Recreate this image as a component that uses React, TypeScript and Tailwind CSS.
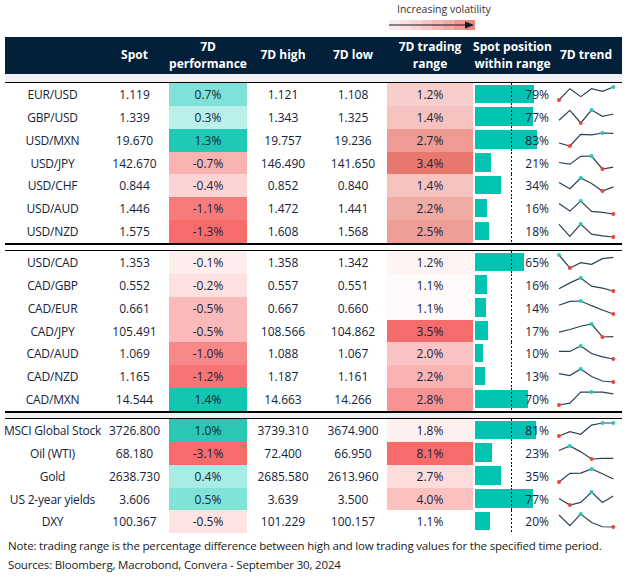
const COLS =
  "grid grid-cols-[95px_69px_78px_72px_68px_86px_2px_75px_72px]";

type Row = {
  name: string;
  spot: string;
  perf: string;
  perfBg: string;
  high: string;
  low: string;
  range: string;
  rangeBg: string;
  pos: number;
  trend: number[];
};

const sections: Row[][] = [
  [
    { name: "EUR/USD", spot: "1.119", perf: "0.7%", perfBg: "bg-[#7fe1d7]", high: "1.121", low: "1.108", range: "1.2%", rangeBg: "bg-[#f7cecb]", pos: 79, trend: [0, 0.87, 0.26, 0.87, 0.67, 1] },
    { name: "GBP/USD", spot: "1.339", perf: "0.3%", perfBg: "bg-[#b9f0ea]", high: "1.343", low: "1.325", range: "1.4%", rangeBg: "bg-[#f5c4c1]", pos: 77, trend: [0.21, 0.97, 0, 1, 0.51, 0.69] },
    { name: "USD/MXN", spot: "19.670", perf: "1.3%", perfBg: "bg-[#1fc9b6]", high: "19.757", low: "19.236", range: "2.7%", rangeBg: "bg-[#ef9a93]", pos: 83, trend: [0.23, 0, 0.9, 0.85, 1, 0.97] },
    { name: "USD/JPY", spot: "142.670", perf: "-0.7%", perfBg: "bg-[#f9b2b2]", high: "146.490", low: "141.650", range: "3.4%", rangeBg: "bg-[#e8786e]", pos: 21, trend: [0.5, 0.375, 0.975, 1, 0, 0.15] },
    { name: "USD/CHF", spot: "0.844", perf: "-0.4%", perfBg: "bg-[#fcd4d4]", high: "0.852", low: "0.840", range: "1.4%", rangeBg: "bg-[#f5c4c1]", pos: 34, trend: [0.66, 0.18, 1, 0.58, 0, 0.32] },
    { name: "USD/AUD", spot: "1.446", perf: "-1.1%", perfBg: "bg-[#f87b7b]", high: "1.472", low: "1.441", range: "2.2%", rangeBg: "bg-[#f0aba5]", pos: 16, trend: [0.8, 0.225, 1, 0.2, 0.125, 0] },
    { name: "USD/NZD", spot: "1.575", perf: "-1.3%", perfBg: "bg-[#f76b6b]", high: "1.608", low: "1.568", range: "2.5%", rangeBg: "bg-[#ee9e97]", pos: 18, trend: [0.97, 0.05, 1, 0.22, 0.08, 0] },
  ],
  [
    { name: "USD/CAD", spot: "1.353", perf: "-0.1%", perfBg: "bg-[#fdeded]", high: "1.358", low: "1.342", range: "1.2%", rangeBg: "bg-[#fff3f3]", pos: 65, trend: [1, 0, 0.41, 0.28, 0.72, 0.82] },
    { name: "CAD/GBP", spot: "0.552", perf: "-0.2%", perfBg: "bg-[#fde1e1]", high: "0.557", low: "0.551", range: "1.1%", rangeBg: "bg-[#fffafa]", pos: 16, trend: [0.175, 0.625, 1, 0.375, 0.225, 0] },
    { name: "CAD/EUR", spot: "0.661", perf: "-0.5%", perfBg: "bg-[#fbbaba]", high: "0.667", low: "0.660", range: "1.1%", rangeBg: "bg-[#fffafa]", pos: 14, trend: [0.67, 0.97, 1, 0.64, 0.31, 0] },
    { name: "CAD/JPY", spot: "105.491", perf: "-0.5%", perfBg: "bg-[#fbbaba]", high: "108.566", low: "104.862", range: "3.5%", rangeBg: "bg-[#f56c6c]", pos: 17, trend: [0.375, 0.575, 0.825, 1, 0, 0.025] },
    { name: "CAD/AUD", spot: "1.069", perf: "-1.0%", perfBg: "bg-[#f88787]", high: "1.088", low: "1.067", range: "2.0%", rangeBg: "bg-[#fbc4c4]", pos: 10, trend: [0.58, 0.58, 1, 0.42, 0.16, 0] },
    { name: "CAD/NZD", spot: "1.165", perf: "-1.2%", perfBg: "bg-[#f77474]", high: "1.187", low: "1.161", range: "2.2%", rangeBg: "bg-[#fab2b2]", pos: 13, trend: [0.65, 0.5, 1, 0.425, 0.075, 0] },
    { name: "CAD/MXN", spot: "14.544", perf: "1.4%", perfBg: "bg-[#13c6b1]", high: "14.663", low: "14.266", range: "2.8%", rangeBg: "bg-[#f89393]", pos: 70, trend: [0, 0.14, 0.99, 1, 0.99, 0.86] },
  ],
  [
    { name: "MSCI Global Stock", spot: "3726.800", perf: "1.0%", perfBg: "bg-[#2ac7b4]", high: "3739.310", low: "3674.900", range: "1.8%", rangeBg: "bg-[#fff0f0]", pos: 81, trend: [0, 0.34, 0.13, 0.84, 1, 1] },
    { name: "Oil (WTI)", spot: "68.180", perf: "-3.1%", perfBg: "bg-[#f76b6b]", high: "72.400", low: "66.950", range: "8.1%", rangeBg: "bg-[#f76b6b]", pos: 23, trend: [0.65, 1, 0.55, 0, 0.05, 0.05] },
    { name: "Gold", spot: "2638.730", perf: "0.4%", perfBg: "bg-[#a7ede5]", high: "2685.580", low: "2613.960", range: "2.7%", rangeBg: "bg-[#fddcdc]", pos: 35, trend: [0, 0.67, 0.69, 1, 0.64, 0.23] },
    { name: "US 2-year yields", spot: "3.606", perf: "0.5%", perfBg: "bg-[#80e3d8]", high: "3.639", low: "3.500", range: "4.0%", rangeBg: "bg-[#fbc0c0]", pos: 77, trend: [0.5, 0, 0.2, 1, 0.2, 0.7] },
    { name: "DXY", spot: "100.367", perf: "-0.5%", perfBg: "bg-[#fde3e3]", high: "101.229", low: "100.157", range: "1.1%", rangeBg: "bg-white", pos: 20, trend: [0.92, 0.1, 1, 0.34, 0.02, 0] },
  ],
];

const legendSteps = ["#fde9e9", "#fcdedd", "#fad2d0", "#f8c5c2", "#f6b7b3", "#f4a8a3", "#f19891", "#ee857d"];

function Sparkline({ values }: { values: number[] }) {
  const pts = values.map((v, i) => [9 + i * 10.86, 4 + (1 - v) * 13]);
  return (
    <svg width="72" height="23" className="block">
      <polyline
        points={pts.map((p) => p.join(",")).join(" ")}
        fill="none"
        stroke="#2e4155"
        strokeWidth="1.2"
      />
      {pts.map(([x, y], i) =>
        values[i] === 1 || values[i] === 0 ? (
          <circle key={i} cx={x} cy={y} r="2" fill={values[i] === 1 ? "#1fcbbb" : "#e8453c"} />
        ) : null
      )}
    </svg>
  );
}

function Cell({ children, className = "" }: { children?: React.ReactNode; className?: string }) {
  return (
    <div className={`flex items-center justify-center whitespace-nowrap pt-[1px] ${className}`}>
      {children}
    </div>
  );
}

function HeadCell({ lines }: { lines: string[] }) {
  return (
    <div className="flex flex-col items-center justify-center whitespace-nowrap">
      {lines.map((l) => (
        <span key={l} className="block">{l}</span>
      ))}
    </div>
  );
}

function DataRow({ r }: { r: Row }) {
  return (
    <div className={`${COLS} h-[22.86px]`}>
      <Cell className="tracking-[-0.2px]">{r.name}</Cell>
      <Cell>{r.spot}</Cell>
      <Cell className={r.perfBg}>{r.perf}</Cell>
      <Cell>{r.high}</Cell>
      <Cell>{r.low}</Cell>
      <Cell className={r.rangeBg}>{r.range}</Cell>
      <div />
      <div className="relative">
        <div className="mt-[1.5px] h-[18.5px] bg-[#00c4b1]" style={{ width: r.pos * 0.75 }} />
        <div className="absolute left-[36px] top-0 bottom-0 w-px bg-[repeating-linear-gradient(to_bottom,#111_0_2px,transparent_2px_4px)]" />
        <span className="absolute right-[1px] top-0 bottom-0 flex items-center pt-[1px]">{r.pos}%</span>
      </div>
      <Sparkline values={r.trend} />
    </div>
  );
}

function Divider({ fill }: { fill: string }) {
  return (
    <div>
      <div className="h-[1.5px] bg-black" />
      <div className={`h-[5px] ${fill}`} />
      <div className="h-[1.5px] bg-black" />
    </div>
  );
}

export default function App() {
  return (
    <div className="w-[632px] h-[577px] bg-white font-['Open_Sans',sans-serif] text-[12px] text-[#14233a]">
      {/* legend */}
      <div className="h-[37px] pl-[389px] pt-[2px]">
        <div className="pl-[8px] text-[10.5px] leading-[14px] text-[#333]">Increasing volatility</div>
        <svg width="86" height="10" className="mt-[4px] block">
          {legendSteps.map((c, i) => (
            <rect key={c} x={i * 10.75} y="0" width="10.75" height="10" fill={c} />
          ))}
          <line x1="0" y1="5" x2="78" y2="5" stroke="#0d1b2a" strokeWidth="1.2" />
          <polygon points="76,1.5 85,5 76,8.5" fill="#0d1b2a" />
        </svg>
      </div>

      <div className="ml-[5px] w-[617px]">
        {/* header */}
        <div className={`${COLS} h-[37px] bg-[#02203a] text-white font-bold leading-[16.5px]`}>
          <div />
          <HeadCell lines={["Spot"]} />
          <HeadCell lines={["7D", "performance"]} />
          <HeadCell lines={["7D high"]} />
          <HeadCell lines={["7D low"]} />
          <HeadCell lines={["7D trading", "range"]} />
          <div />
          <HeadCell lines={["Spot position", "within range"]} />
          <HeadCell lines={["7D trend"]} />
        </div>
        <div className="h-[7.5px] bg-[#eff1f4]" />
        <div className="h-[1.5px] bg-black" />

        {sections[0].map((r) => <DataRow key={r.name} r={r} />)}
        <Divider fill="bg-white" />
        {sections[1].map((r) => <DataRow key={r.name} r={r} />)}
        <Divider fill="bg-[#eff1f4]" />
        {sections[2].map((r) => <DataRow key={r.name} r={r} />)}
      </div>

      {/* footnote */}
      <div className="mt-[4px] pl-[8px] text-[11.5px] tracking-[-0.18px] leading-[18.5px] text-[#1a1a1a] whitespace-nowrap">
        <p>Note: trading range is the percentage difference between high and low trading values for the specified time period.</p>
        <p>Sources: Bloomberg, Macrobond, Convera - September 30, 2024</p>
      </div>
    </div>
  );
}
